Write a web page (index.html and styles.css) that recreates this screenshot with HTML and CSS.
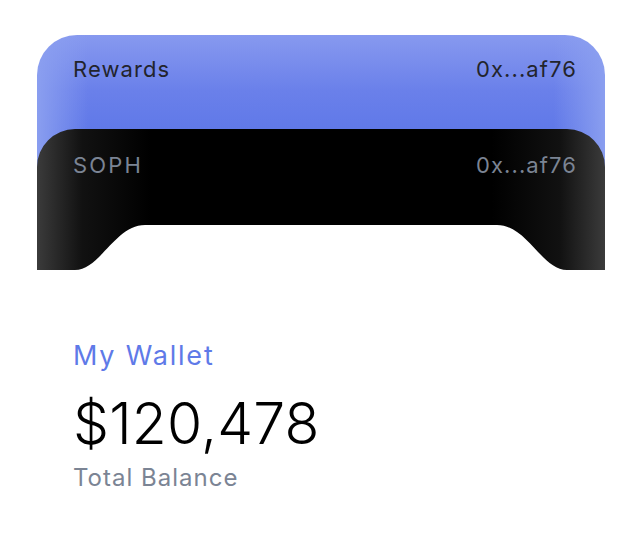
FILE: index.html
```html
<!DOCTYPE html>
<html>
<head>
<meta charset="utf-8">
<link rel="stylesheet" href="styles.css">
</head>
<body>
<div class="page">
  <div class="cards">
    <div class="card card-blue">
      <span class="name">Rewards</span>
      <span class="addr">0x...af76</span>
    </div>
    <div class="card card-black">
      <span class="name">SOPH</span>
      <span class="addr">0x...af76</span>
    </div>
  </div>
  <div class="wallet">
    <div class="wallet-title">My Wallet</div>
    <div class="wallet-amount">$120,478</div>
    <div class="wallet-label">Total Balance</div>
  </div>
</div>
</body>
</html>
```
FILE: styles.css
```css
html, body {
  margin: 0;
  padding: 0;
  background: #ffffff;
}
body {
  font-family: "Inter", "Liberation Sans", sans-serif;
}
.page {
  padding: 35px 36px 0 37px;
  width: 568px;
}
.cards {
  display: flex;
  flex-direction: column;
}
.card {
  width: 568px;
  box-sizing: border-box;
  display: flex;
  justify-content: space-between;
  align-items: flex-start;
  padding: 21px 28px 0 36px;
  font-size: 22px;
  letter-spacing: 1.1px;
}
.card-blue {
  height: 140px;
  border-radius: 40px 40px 0 0;
  background:
    linear-gradient(to right, rgba(140,160,240,0.95) 0%, rgba(140,160,240,0) 9%, rgba(140,160,240,0) 91%, rgba(140,160,240,0.95) 100%),
    linear-gradient(to bottom, #8799ef 0%, #6a80ea 40%, #5f78e8 70%);
}
.card-blue .name, .card-blue .addr { color: #22242c; }
.card-black {
  margin-top: -46px;
  height: 141px;
  background: linear-gradient(to right, #3b3b3b 0%, #111 8%, #000 20%, #000 80%, #111 92%, #3b3b3b 100%);
  clip-path: path("M0,38 A38,38 0 0 1 38,0 H530 A38,38 0 0 1 568,38 V141 H530 C505,141 490,96 460,96 H108 C78,96 63,141 38,141 H0 Z");
  color: #7b8494;
  padding-top: 23px;
}
.card-black .name { letter-spacing: 2.2px; }
.wallet {
  padding: 70px 0 0 36px;
}
.wallet-title {
  font-size: 27px;
  color: #5f7ae8;
  letter-spacing: 1.8px;
  line-height: 32px;
}
.wallet-amount {
  font-size: 57px;
  font-weight: 300;
  color: #000;
  line-height: 68px;
  margin-top: 18px;
  letter-spacing: 0.2px;
}
.wallet-label {
  font-size: 24px;
  color: #7b8494;
  line-height: 28px;
  margin-top: 6px;
  letter-spacing: 1px;
}
```
